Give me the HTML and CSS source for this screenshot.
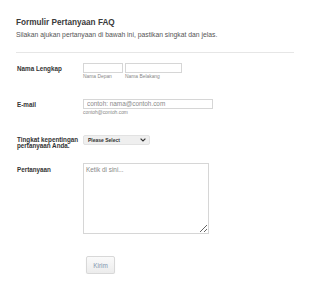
FILE: index.html
```html
<!DOCTYPE html>
<html lang="id">
<head>
  <meta charset="UTF-8">
  <meta name="viewport" content="width=device-width, initial-scale=1.0">
  <title>Formulir Pertanyaan FAQ</title>
  <link rel="stylesheet" href="styles.css">
</head>
<body>
  <div class="form">
    <div class="header">
      <h1>Formulir Pertanyaan FAQ</h1>
      <p>Silakan ajukan pertanyaan di bawah ini, pastikan singkat dan jelas.</p>
    </div>

    <div class="row row-name">
      <label class="label">Nama Lengkap</label>
      <div class="field name-fields">
        <div class="sub">
          <input type="text" class="input first">
          <span class="sublabel">Nama Depan</span>
        </div>
        <div class="sub">
          <input type="text" class="input last">
          <span class="sublabel">Nama Belakang</span>
        </div>
      </div>
    </div>

    <div class="row row-email">
      <label class="label">E-mail</label>
      <div class="field">
        <input type="text" class="input email" placeholder="contoh: nama@contoh.com">
        <span class="sublabel">contoh@contoh.com</span>
      </div>
    </div>

    <div class="row row-select">
      <label class="label">Tingkat kepentingan pertanyaan Anda.</label>
      <div class="field">
        <div class="select">
          <span>Please Select</span>
          <svg width="6" height="4" viewBox="0 0 6 4"><path d="M0.6 0.6 L3 3 L5.4 0.6" fill="none" stroke="#333" stroke-width="1.2"/></svg>
        </div>
      </div>
    </div>

    <div class="row row-text">
      <label class="label">Pertanyaan</label>
      <div class="field">
        <textarea class="textarea" placeholder="Ketik di sini..."></textarea>
      </div>
    </div>

    <div class="actions">
      <button class="button">Kirim</button>
    </div>
  </div>
</body>
</html>
```

FILE: styles.css
```css
body {
  margin: 0;
  font-family: "Liberation Sans", Arial, sans-serif;
  background-color: #fff;
  color: #333;
}
.form {
  padding: 18px 16px 0 16px;
}
.header {
  border-bottom: 1px solid #e6e6e6;
  padding-bottom: 13px;
  margin-bottom: 10px;
}
.header h1 {
  margin: 0;
  font-size: 8.2px;
  line-height: 9.4px;
  color: #3b3b3b;
}
.header p {
  margin: 4px 0 0;
  font-size: 6.8px;
  line-height: 7.5px;
  color: #555;
}
.row {
  display: flex;
}
.label {
  width: 66px;
  padding-left: 1px;
  padding-top: 2px;
  font-size: 6.3px;
  line-height: 7px;
  font-weight: bold;
  color: #333;
}
.field {
  display: flex;
  flex-direction: column;
}
.name-fields {
  flex-direction: row;
  gap: 2px;
}
.sub {
  display: flex;
  flex-direction: column;
}
.input {
  box-sizing: border-box;
  height: 10px;
  margin: 0;
  padding: 0 3px;
  border: 1px solid #d6d6d6;
  font-family: inherit;
  font-size: 6.4px;
  color: #555;
}
.input::placeholder {
  color: #8a8a8a;
}
.first {
  width: 40px;
}
.last {
  width: 57px;
}
.email {
  width: 130px;
}
.sublabel {
  margin-top: 1px;
  font-size: 4.9px;
  line-height: 6px;
  color: #888;
}
.row-name,
.row-email {
  margin-bottom: 19px;
}
.row-select {
  margin-bottom: 13px;
}
.row-select .label {
  padding-top: 2px;
  line-height: 6.5px;
}
.select {
  box-sizing: border-box;
  width: 67px;
  height: 10px;
  display: flex;
  align-items: center;
  justify-content: space-between;
  padding: 0 3px 0 4px;
  background-color: #efefef;
  border: 1px solid #e2e2e2;
  border-radius: 2px;
  font-size: 5px;
  font-weight: bold;
  color: #333;
}
.row-text .label {
  padding-top: 3px;
}
.textarea {
  box-sizing: border-box;
  width: 126px;
  height: 71px;
  margin: 0;
  padding: 2px;
  border: 1px solid #d6d6d6;
  font-family: inherit;
  font-size: 6.4px;
}
.textarea::placeholder {
  color: #888;
}
.actions {
  padding: 20px 0 0 70px;
}
.button {
  box-sizing: border-box;
  width: 29px;
  height: 18px;
  padding: 0;
  border: 1px solid #d8d8d8;
  border-radius: 2px;
  background: linear-gradient(#fafafa, #ececec);
  box-shadow: 0 1px 1px rgba(0,0,0,0.08);
  font-family: inherit;
  font-size: 6.4px;
  color: #8496b0;
  cursor: pointer;
}
```
